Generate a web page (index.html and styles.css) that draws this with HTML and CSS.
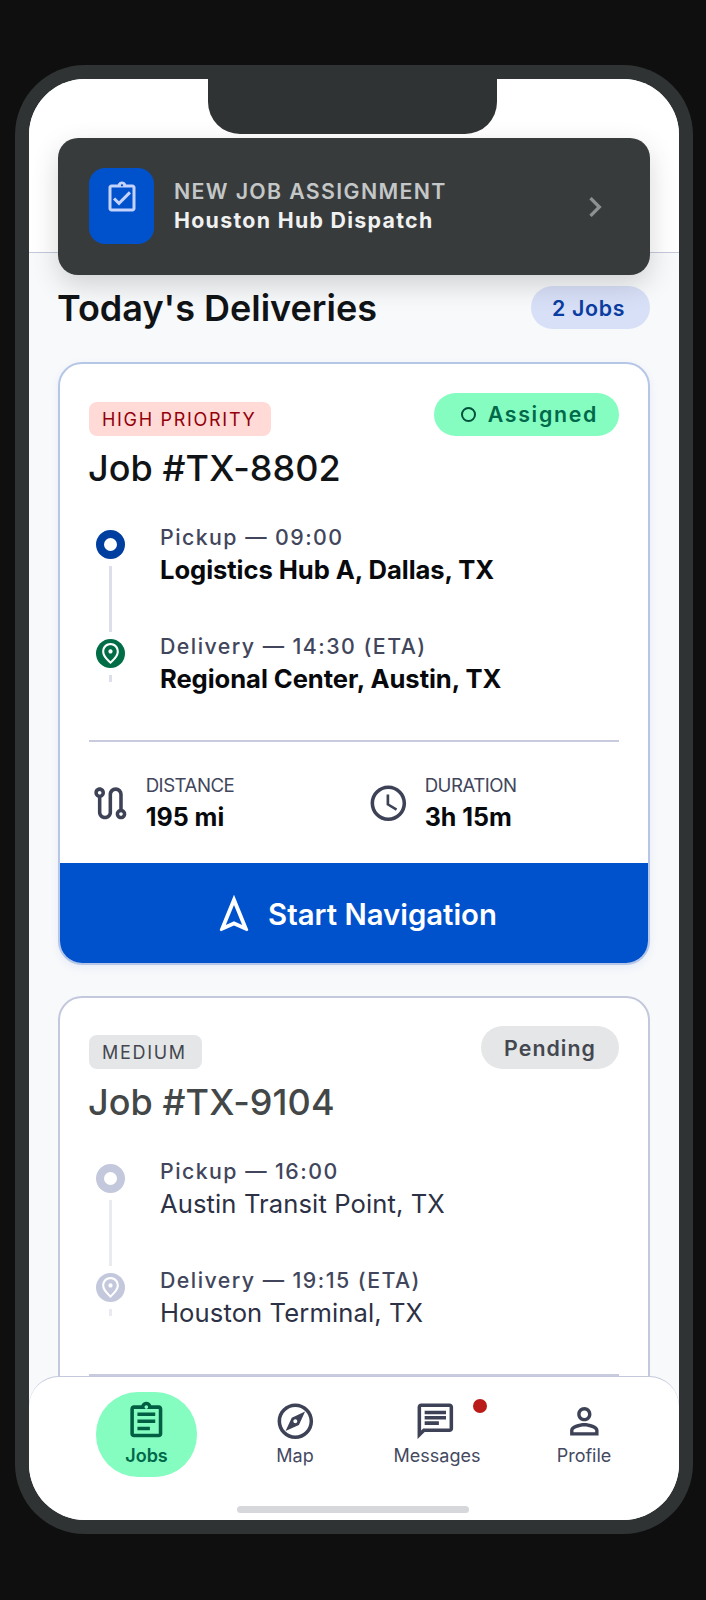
FILE: index.html
```html
<!DOCTYPE html>
<html lang="en">
<head>
<meta charset="utf-8">
<title>Today's Deliveries</title>
<link rel="stylesheet" href="styles.css">
</head>
<body>
<div class="phone">
  <div class="screen">
    <div class="notch"></div>
    <div class="toast">
      <div class="toast-icon">
        <svg class="i36" viewBox="0 0 24 24"><path d="M19 3h-4.18C14.4 1.84 13.3 1 12 1c-1.3 0-2.4.84-2.82 2H5C3.9 3 3 3.9 3 5v14c0 1.1.9 2 2 2h14c1.1 0 2-.9 2-2V5c0-1.1-.9-2-2-2zm-7-.25c.41 0 .75.34.75.75s-.34.75-.75.75-.75-.34-.75-.75.34-.75.75-.75zM19 19H5V5h14v14z"/><path d="M17.99 9l-1.41-1.42-6.59 6.59-2.58-2.57-1.42 1.41 4 3.99z"/></svg>
      </div>
      <div class="toast-text">
        <div class="toast-over">NEW JOB ASSIGNMENT</div>
        <div class="toast-title">Houston Hub Dispatch</div>
      </div>
      <svg class="chev" viewBox="0 0 24 24"><path d="M10 6L8.59 7.41 13.17 12l-4.58 4.59L10 18l6-6z"/></svg>
    </div>
    <div class="topbar"></div>
    <main class="content">
      <div class="section-head">
        <h1>Today's Deliveries</h1>
        <span class="count">2 Jobs</span>
      </div>

      <article class="card card-active">
        <div class="card-body">
          <div class="card-head">
            <div>
              <span class="badge badge-high">HIGH PRIORITY</span>
              <h2>Job #TX-8802</h2>
            </div>
            <span class="status status-assigned"><i class="ring"></i>Assigned</span>
          </div>
          <div class="route">
            <div class="stop">
              <div class="rail"><span class="dot dot-pick-on"></span><span class="line line-long"></span></div>
              <div class="stop-text"><div class="stop-label">Pickup — 09:00</div><div class="stop-name strong">Logistics Hub A, Dallas, TX</div></div>
            </div>
            <div class="stop">
              <div class="rail"><span class="dot dot-drop-on"><svg class="i25" viewBox="0 0 24 24"><path d="M12 12c-1.1 0-2-.9-2-2s.9-2 2-2 2 .9 2 2-.9 2-2 2zm6-1.8C18 6.57 15.35 4 12 4s-6 2.57-6 6.2c0 2.34 1.95 5.44 6 9.14 4.05-3.7 6-6.8 6-9.14zM12 2c4.2 0 8 3.22 8 8.2 0 3.32-2.67 7.25-8 11.8-5.33-4.55-8-8.48-8-11.8C4 5.22 7.8 2 12 2z"/></svg></span><span class="line line-short"></span></div>
              <div class="stop-text"><div class="stop-label">Delivery — 14:30 (ETA)</div><div class="stop-name strong">Regional Center, Austin, TX</div></div>
            </div>
          </div>
          <div class="stats">
            <div class="stat">
              <svg class="i43" viewBox="0 0 24 24"><path d="M19 15.18V7c0-2.21-1.79-4-4-4s-4 1.79-4 4v10c0 1.1-.9 2-2 2s-2-.9-2-2V8.82C8.16 8.4 9 7.3 9 6c0-1.66-1.34-3-3-3S3 4.34 3 6c0 1.3.84 2.4 2 2.82V17c0 2.21 1.79 4 4 4s4-1.79 4-4V7c0-1.1.9-2 2-2s2 .9 2 2v8.18c-1.16.41-2 1.51-2 2.82 0 1.66 1.34 3 3 3s3-1.34 3-3c0-1.3-.84-2.4-2-2.82zM6 7c-.55 0-1-.45-1-1s.45-1 1-1 1 .45 1 1-.45 1-1 1zm12 12c-.55 0-1-.45-1-1s.45-1 1-1 1 .45 1 1-.45 1-1 1z"/></svg>
              <div><div class="stat-label">DISTANCE</div><div class="stat-value">195 mi</div></div>
            </div>
            <div class="stat">
              <svg class="i43" viewBox="0 0 24 24"><path d="M11.99 2C6.47 2 2 6.48 2 12s4.47 10 9.99 10C17.52 22 22 17.52 22 12S17.52 2 11.99 2zM12 20c-4.42 0-8-3.58-8-8s3.58-8 8-8 8 3.58 8 8-3.58 8-8 8z"/><path d="M12.5 7H11v6l5.25 3.15.75-1.23-4.5-2.67z"/></svg>
              <div><div class="stat-label">DURATION</div><div class="stat-value">3h 15m</div></div>
            </div>
          </div>
        </div>
        <button class="cta">
          <svg class="i44" viewBox="0 0 24 24"><path d="M12 7.27l4.28 10.43-3.47-1.53-.81-.36-.81.36-3.47 1.53L12 7.27M12 2L4.5 20.29l.71.71L12 18l6.79 3 .71-.71L12 2z"/></svg>
          Start Navigation
        </button>
      </article>

      <article class="card card-muted">
        <div class="card-body">
          <div class="card-head">
            <div>
              <span class="badge badge-medium">MEDIUM</span>
              <h2>Job #TX-9104</h2>
            </div>
            <span class="status status-pending">Pending</span>
          </div>
          <div class="route">
            <div class="stop">
              <div class="rail"><span class="dot dot-pick-off"></span><span class="line line-long line-light"></span></div>
              <div class="stop-text"><div class="stop-label">Pickup — 16:00</div><div class="stop-name">Austin Transit Point, TX</div></div>
            </div>
            <div class="stop">
              <div class="rail"><span class="dot dot-drop-off"><svg class="i25" viewBox="0 0 24 24"><path d="M12 12c-1.1 0-2-.9-2-2s.9-2 2-2 2 .9 2 2-.9 2-2 2zm6-1.8C18 6.57 15.35 4 12 4s-6 2.57-6 6.2c0 2.34 1.95 5.44 6 9.14 4.05-3.7 6-6.8 6-9.14zM12 2c4.2 0 8 3.22 8 8.2 0 3.32-2.67 7.25-8 11.8-5.33-4.55-8-8.48-8-11.8C4 5.22 7.8 2 12 2z"/></svg></span><span class="line line-short line-light"></span></div>
              <div class="stop-text"><div class="stop-label">Delivery — 19:15 (ETA)</div><div class="stop-name">Houston Terminal, TX</div></div>
            </div>
          </div>
          <div class="stats"></div>
        </div>
      </article>
    </main>

    <nav class="tabbar">
      <a class="tab tab-active">
        <svg class="i43" viewBox="0 0 24 24"><path d="M19 3h-4.18C14.4 1.84 13.3 1 12 1c-1.3 0-2.4.84-2.82 2H5c-1.1 0-2 .9-2 2v14c0 1.1.9 2 2 2h14c1.1 0 2-.9 2-2V5c0-1.1-.9-2-2-2zm-7 0c.55 0 1 .45 1 1s-.45 1-1 1-1-.45-1-1 .45-1 1-1zm7 16H5V5h14v14z"/><path d="M7 15h7v2H7zM7 11h10v2H7zM7 7h10v2H7z"/></svg>
        <span>Jobs</span>
      </a>
      <a class="tab tab-map">
        <svg class="i43" viewBox="0 0 24 24"><path d="M12 2C6.48 2 2 6.48 2 12s4.48 10 10 10 10-4.48 10-10S17.52 2 12 2zm0 18c-4.41 0-8-3.59-8-8s3.59-8 8-8 8 3.59 8 8-3.59 8-8 8zm-5.5-2.5l7.51-3.49L17.5 6.5 9.99 9.99 6.5 17.5zm5.5-6.6c.61 0 1.1.49 1.1 1.1s-.49 1.1-1.1 1.1-1.1-.49-1.1-1.1.49-1.1 1.1-1.1z"/></svg>
        <span>Map</span>
      </a>
      <a class="tab tab-msg">
        <svg class="i43" viewBox="0 0 24 24"><path d="M20 2H4c-1.1 0-1.99.9-1.99 2L2 22l4-4h14c1.1 0 2-.9 2-2V4c0-1.1-.9-2-2-2zm0 14H5.17L4 17.17V4h16v12z"/><path d="M6 12h8v2H6zM6 9h12v2H6zM6 6h12v2H6z"/></svg>
        <span>Messages</span>
        <i class="notif"></i>
      </a>
      <a class="tab tab-prof">
        <svg class="i43" viewBox="0 0 24 24"><path d="M12 5.9c1.16 0 2.1.94 2.1 2.1s-.94 2.1-2.1 2.1S9.9 9.16 9.9 8s.94-2.1 2.1-2.1m0 9c2.97 0 6.1 1.46 6.1 2.1v1.1H5.9V17c0-.64 3.13-2.1 6.1-2.1M12 4C9.79 4 8 5.79 8 8s1.79 4 4 4 4-1.79 4-4-1.79-4-4-4zm0 9c-2.67 0-8 1.34-8 4v3h16v-3c0-2.66-5.33-4-8-4z"/></svg>
        <span>Profile</span>
      </a>
      <div class="home-bar"></div>
    </nav>
  </div>
</div>
</body>
</html>
```
FILE: styles.css
```css
* { box-sizing: border-box; }
html, body { margin: 0; height: 100%; }
body {
  background: #0f0f0f;
  font-family: Inter, "Liberation Sans", sans-serif;
  overflow: hidden;
  padding: 65px 13px 0 15px;
}
svg { display: block; fill: currentColor; flex: none; }
.i36 { width: 36px; height: 36px; }
.i25 { width: 25px; height: 25px; }
.i43 { width: 42.67px; height: 42.67px; }
.i44 { width: 46px; height: 46px; }

.phone {
  width: 678px;
  height: 1469px;
  background: #2f3334;
  border-radius: 70px;
  padding: 14px;
}
.screen {
  position: relative;
  height: 1441px;
  border-radius: 56px;
  overflow: hidden;
  background: #f8f9fb;
}
.notch {
  position: absolute;
  z-index: 5;
  left: 179px;
  top: 0;
  width: 289px;
  height: 55px;
  background: #2f3334;
  border-radius: 0 0 32px 32px;
}
.topbar {
  height: 174px;
  background: #fff;
  border-bottom: 1.5px solid #c4c8dc;
}
.toast {
  position: absolute;
  z-index: 4;
  left: 29px;
  top: 59px;
  width: 592px;
  height: 137px;
  display: flex;
  align-items: center;
  padding: 0 30px;
  background: #383b3c;
  border-radius: 20px;
  box-shadow: 0 10px 28px rgba(0, 0, 0, .16);
}
.toast-icon {
  width: 65px;
  height: 76px;
  margin-top: -1px;
  margin-left: 1px;
  margin-right: 20px;
  border-radius: 16px;
  background: #0052cc;
  color: #c4d2ff;
  display: flex;
  justify-content: center;
  padding-top: 12px;
}
.toast-text { flex: 1; margin-top: -1px; }
.toast-over {
  color: #c4c7c7;
  font-size: 21.33px;
  font-weight: 600;
  letter-spacing: 1.35px;
  line-height: 28px;
}
.toast-title {
  color: #f0f1f1;
  font-size: 21.33px;
  font-weight: 700;
  letter-spacing: 1.3px;
  line-height: 30px;
}
.chev { width: 40px; height: 40px; color: #8e9192; margin-right: 5px; margin-top: 1px; }

.content { padding: 0 29px; height: 1267px; overflow: hidden; }
.section-head {
  display: flex;
  justify-content: space-between;
  align-items: center;
  margin-top: 33px;
  height: 43px;
}
h1 {
  margin: 0 0 0 -1px;
  font-size: 36px;
  font-weight: 600;
  color: #111416;
}
.count {
  width: 119px;
  height: 43px;
  padding-right: 4px;
  border-radius: 22px;
  background: #d8e0f8;
  color: #0a3da0;
  font-size: 21.33px;
  font-weight: 600;
  letter-spacing: .7px;
  display: flex;
  align-items: center;
  justify-content: center;
}

.card {
  background: #fff;
  border-radius: 24px;
  overflow: hidden;
}
.card-active {
  margin-top: 33px;
  border: 2px solid #b6c6e6;
  box-shadow: 0 3px 8px rgba(0, 82, 204, .08);
  height: 603px;
  display: flex;
  flex-direction: column;
}
.card-muted {
  margin-top: 31px;
  border: 2px solid #c4c8dc;
}
.card-muted .card-body { padding-top: 28px; }
.card-muted h2 { margin-top: 11px; color: #434748; }
.card-body { padding: 29px 29px 0; flex: 1; }
.card-head { display: flex; justify-content: space-between; align-items: flex-start; }
.badge {
  display: inline-block;
  margin-top: 9px;
  height: 34px;
  line-height: 35px;
  padding: 0 15px 0 13px;
  border-radius: 8px;
  font-size: 18px;
  letter-spacing: 1.7px;
}
.badge-high { background: #ffdad6; color: #93000a; }
.badge-medium { background: #e4e6e8; color: #44474f; }
h2 {
  margin: 10px 0 0 -1px;
  font-size: 36px;
  line-height: 44px;
  font-weight: 500;
  letter-spacing: .06px;
  color: #111416;
}
.status {
  height: 43px;
  border-radius: 22px;
  padding: 0 23px;
  font-size: 21.33px;
  font-weight: 600;
  letter-spacing: 1.05px;
  display: flex;
  align-items: center;
}
.status-assigned { background: #85fcc0; color: #00694a; letter-spacing: 1.7px; padding: 0 21px 0 24px; line-height: 41px; }
.status-pending { background: #e4e6e8; color: #44474f; }
.ring {
  width: 15px;
  height: 15px;
  border: 2px solid #00513a;
  border-radius: 50%;
  margin: 0 12px 0 3px;
}

.route { margin-top: 40px; }
.stop { display: flex; height: 109px; }
.stop:last-child { height: 100px; }
.rail { width: 71px; padding-left: 7px; display: flex; flex-direction: column; align-items: flex-start; flex: none; }
.dot { width: 29px; height: 29px; border-radius: 50%; display: flex; align-items: center; justify-content: center; flex: none; }
.dot-pick-on { border: 8.5px solid #003ea0; background: #fff; }
.dot-pick-off { border: 8.5px solid #c4c8dc; background: #fff; }
.dot-drop-on { background: #006d47; color: #fff; }
.dot-drop-off { background: #c4c8dc; color: #fff; }
.line { width: 3px; margin-left: 13px; margin-top: 7px; background: #dcdfe9; }
.line-long { height: 66px; }
.line-short { height: 7px; }
.line-light { background: #e9ebf1; }
.stop-text { margin-top: -8px; }
.stop-label {
  font-size: 21.33px;
  line-height: 30px;
  font-weight: 500;
  letter-spacing: 1.45px;
  color: #41465c;
}
.stop-name {
  font-size: 25.6px;
  line-height: 36px;
  letter-spacing: .1px;
  color: #2c3145;
}
.stop-name.strong { font-weight: 700; color: #07090c; letter-spacing: -.06px; }

.stats {
  margin-top: 1px;
  border-top: 2px solid #c8cbdd;
  padding-top: 31px;
  display: flex;
}
.stat { display: flex; align-items: center; gap: 15px; flex: none; color: #3d4256; }
.stat:first-child { width: 278px; gap: 14px; }
.stat svg { margin-top: -2px; }
.stat-label { font-size: 18.67px; line-height: 25px; letter-spacing: -.5px; color: #41465c; }
.stat-value { font-size: 25px; font-weight: 700; line-height: 38px; color: #07090c; }
.cta {
  width: 100%;
  height: 100px;
  flex: none;
  border: 0;
  padding: 2px 0 0;
  background: #0052cc;
  color: #fff;
  font-family: inherit;
  font-size: 29.33px;
  font-weight: 600;
  display: flex;
  align-items: center;
  justify-content: center;
  gap: 11px;
}

.tabbar {
  position: absolute;
  z-index: 3;
  left: 0;
  right: 0;
  bottom: 0;
  height: 144px;
  background: #fff;
  border-top: 1.5px solid #c4c8dc;
  border-radius: 30px 30px 0 0;
  display: flex;
  align-items: flex-start;
  padding: 15px 0 0 67px;
}
.tab {
  position: relative;
  height: 85px;
  display: flex;
  flex-direction: column;
  align-items: center;
  color: #3d4256;
  padding-top: 8px;
}
.tab span { font-size: 18px; line-height: 25px; margin-top: 0; color: #44495f; }
.tab-active { width: 101px; background: #85fcc0; border-radius: 42px; color: #005f42; }
.tab-active span { font-weight: 600; color: #00694a; }
.tab-map { margin-left: 48px; width: 100px; }
.tab-msg { margin-left: 22px; width: 140px; }
.tab-msg svg { margin-left: -4px; }
.tab-prof { margin-left: 22px; width: 110px; }
.notif {
  position: absolute;
  top: 7px;
  right: 20px;
  width: 14px;
  height: 14px;
  border-radius: 50%;
  background: #ba1a1a;
}
.home-bar {
  position: absolute;
  left: 208px;
  bottom: 7px;
  width: 232px;
  height: 7px;
  border-radius: 4px;
  background: #d6d7db;
}
```
